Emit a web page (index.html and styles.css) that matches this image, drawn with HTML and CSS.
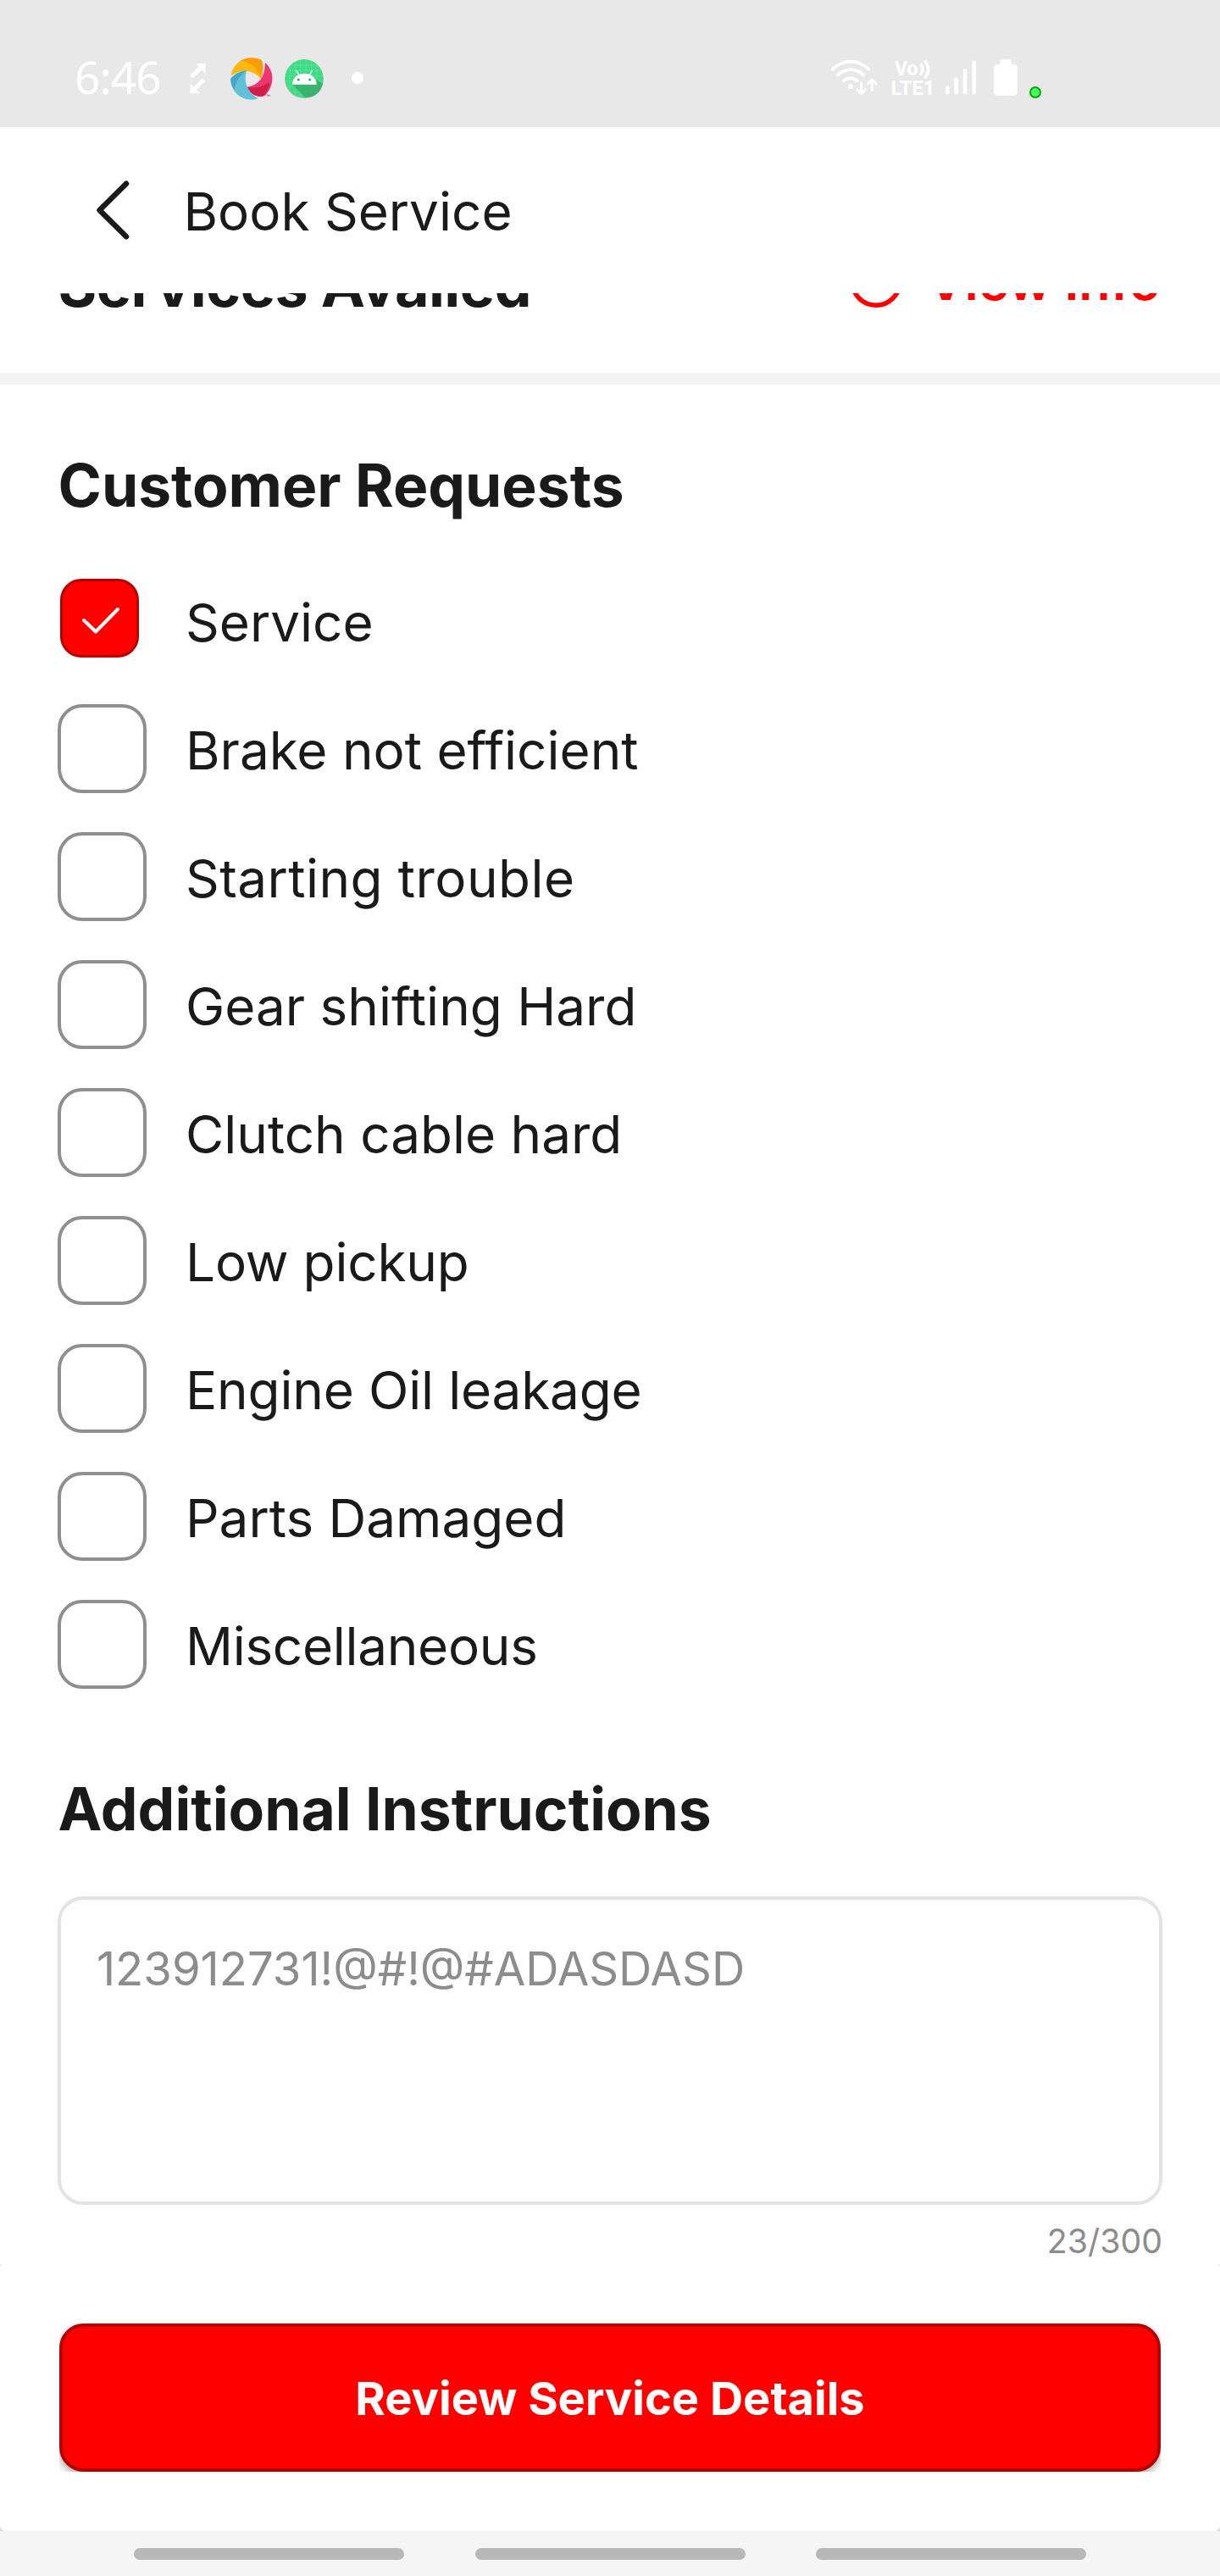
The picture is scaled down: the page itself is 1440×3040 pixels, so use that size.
FILE: index.html
```html
<!DOCTYPE html>
<html lang="en">
<head>
<meta charset="utf-8">
<title>Book Service</title>
<link rel="stylesheet" href="styles.css">
</head>
<body>
<div class="screen">
  <div class="status-bar">
    <span class="clock">6:46</span>
    <svg class="status-icon sync" width="24" height="40" viewBox="222 72 24 40" fill="#fff">
      <path d="M231.500 75H242.500V86.500L238.500 82.500L227.500 92L224.500 89L234.500 78.500Z"/>
      <path d="M239 92.500L242 95.500L232 106L236.500 110H224.500V98.500L228.500 102.500Z"/>
    </svg>
    <svg class="status-icon swirl" width="50" height="50" viewBox="636 83 148 148">
      <path d="M638 146C646 92 700 70 745 92C752 112 750 135 742 156C716 126 676 122 638 146Z" fill="#fdb913"/>
      <path d="M672 95C705 96 732 120 742 156C750 135 752 112 745 92C722 81 694 80 672 95Z" fill="#fc9c06"/>
      <path d="M757 101C790 128 792 180 755 217C725 222 705 210 695 186C735 180 758 150 757 101Z" fill="#ee356f"/>
      <path d="M695 186C705 210 725 222 750 218C762 206 770 192 774 168C748 186 722 191 695 186Z" fill="#cf1f49"/>
      <path d="M692 129C680 165 695 207 734 226C690 240 640 216 636 158C650 140 670 130 692 129Z" fill="#62c1da"/>
      <path d="M692 129C670 130 650 140 636 158C638 175 643 186 650 196C655 166 668 145 692 129Z" fill="#43a9c6"/>
      <path d="M762 213h4v5M769 218v-5l2 3l2-3v5" fill="none" stroke="#ee356f" stroke-width="2"/>
    </svg>
    <svg class="status-icon android" width="48" height="50" viewBox="827 83 144 150">
      <circle cx="899" cy="160" r="68" fill="#b5c2ba"/>
      <circle cx="899" cy="157" r="68" fill="#3ddb85"/>
      <path d="M848 112V203M867 98V217M886 90V224M905 90V224M924 94V220M943 106V208M850 110H947M838 128H960M833 147H965M832 166H966M838 185H960M850 204H947" stroke="#75e6a8" stroke-width="1.500"/>
      <path d="M858 178L942 178L942 160L965 175C960 205 936 225 902 224Z" fill="#35a667" opacity=".75"/>
      <path d="M857 178C859 126 940 126 943 178Z" fill="#fff"/>
      <path d="M872 130L880 143M927 130L919 143" stroke="#fff" stroke-width="4" stroke-linecap="round"/>
      <circle cx="879" cy="161" r="4.500" fill="#3ba868"/><circle cx="919" cy="161" r="4.500" fill="#3ba868"/>
    </svg>
    <span class="more-dot"></span>
    <svg class="status-icon wifi" width="57" height="46" viewBox="60 58 171 138" fill="none" stroke="#fff" stroke-linecap="round" stroke-linejoin="round">
      <path d="M68 96C106 60 159 60 196 96M86 117C115 91 149 91 178 117M108 136C124 124 139 124 155 136" stroke-width="11"/>
      <circle cx="132" cy="158" r="9" fill="#fff" stroke="none"/>
      <path d="M170 145V182M155 168L170 182L185 168M208 170V134M194 148L208 134L223 148" stroke-width="9"/>
    </svg>
    <svg class="status-icon volte" width="54" height="48" viewBox="1050 68 54 48">
      <g fill="#fff" font-family="Roboto, sans-serif" font-weight="700">
        <text x="1056" y="88.500" font-size="23.500" textLength="27.500" lengthAdjust="spacingAndGlyphs">Vo</text>
        <text x="1051.500" y="112" font-size="24" textLength="52" lengthAdjust="spacingAndGlyphs">LTE1</text>
      </g>
      <path d="M1086.500 75Q1091.500 82 1086.500 88.500M1091.500 71.500Q1100 82 1091.500 92" fill="none" stroke="#fff" stroke-width="3.500"/>
    </svg>
    <svg class="status-icon signal" width="38" height="44" viewBox="1115 70 38 44" fill="#fff">
      <rect x="1116" y="101.500" width="4.700" height="10" rx="2.300"/>
      <rect x="1126.300" y="91.500" width="4.700" height="20" rx="2.300"/>
      <rect x="1136.700" y="81" width="4.700" height="30.500" rx="2.300"/>
      <rect x="1147.300" y="71.500" width="4.700" height="40" rx="2.300"/>
    </svg>
    <svg class="status-icon battery" width="28" height="43" viewBox="1173 70 28 43" fill="#fff">
      <rect x="1180.500" y="70" width="13" height="12" rx="2"/>
      <rect x="1173" y="76" width="28" height="37" rx="4.500"/>
    </svg>
    <span class="privacy-dot"></span>
  </div>

  <header class="app-bar">
    <svg class="back" width="43" height="72" viewBox="0 0 43 72" fill="none" stroke="#1a1a1a" stroke-width="6.500" stroke-linecap="round" stroke-linejoin="round"><path d="M37 4.800L5.500 36L37 67.200"/></svg>
    <h1 class="title">Book Service</h1>
  </header>

  <main class="content">
    <section class="availed">
      <div class="availed-row">
        <h2 class="availed-title">Services Availed</h2>
        <a class="view-info">
          <svg width="62" height="62" viewBox="0 0 62 62" fill="none" stroke="#f00" stroke-width="5.500"><circle cx="31" cy="31" r="28.200"/><path d="M31 28V44M31 17V22"/></svg>
          <span>View Info</span>
        </a>
      </div>
    </section>

    <section class="requests">
      <h2 class="heading">Customer Requests</h2>
      <ul class="options">
        <li class="option"><span class="box checked"><svg width="46" height="34" viewBox="0 0 46 34" fill="none" stroke="#fff" stroke-width="4" stroke-linecap="round" stroke-linejoin="round"><path d="M3 17L17 30.500L43 4"/></svg></span><span class="label">Service</span></li>
        <li class="option"><span class="box"></span><span class="label">Brake not efficient</span></li>
        <li class="option"><span class="box"></span><span class="label loose">Starting trouble</span></li>
        <li class="option"><span class="box"></span><span class="label">Gear shifting Hard</span></li>
        <li class="option"><span class="box"></span><span class="label">Clutch cable hard</span></li>
        <li class="option"><span class="box"></span><span class="label snug">Low pickup</span></li>
        <li class="option"><span class="box"></span><span class="label snug">Engine Oil leakage</span></li>
        <li class="option"><span class="box"></span><span class="label">Parts Damaged</span></li>
        <li class="option"><span class="box"></span><span class="label tight">Miscellaneous</span></li>
      </ul>
      <h2 class="heading instructions-title">Additional Instructions</h2>
      <div class="field">123912731!@#!@#ADASDASD</div>
      <div class="counter">23/300</div>
    </section>
  </main>

  <footer class="action-panel">
    <div class="panel-body">
      <div class="button-clip"><button class="submit">Review Service Details</button></div>
    </div>
  </footer>
  <nav class="nav-bar"><span class="handle"></span><span class="handle"></span><span class="handle"></span></nav>
</div>
</body>
</html>
```

FILE: styles.css
```css
* { box-sizing: border-box; }

body {
  margin: 0;
  background: #fff;
  color: #1a1a1a;
  font-family: Inter, sans-serif;
}

h1, h2, ul { margin: 0; padding: 0; }
svg { display: block; flex: none; }

.screen {
  display: flex;
  flex-direction: column;
  width: 1440px;
  height: 3040px;
  overflow: hidden;
  background: #fefefe;
}

/* Status bar */
.status-bar {
  display: flex;
  align-items: flex-start;
  flex: none;
  height: 150px;
  padding: 67px 0 0 88px;
  background: #e8e8e8;
}
.clock {
  width: 134px;
  margin-top: -13px;
  color: #fff;
  font: 400 53px/73px "Noto Sans", sans-serif;
  letter-spacing: -0.9px;
}
.sync { margin-top: 5px; }
.swirl { margin: 0.5px 0 0 26px; }
.android { margin: 0.5px 0 0 13px; }
.more-dot {
  width: 14px;
  height: 14px;
  margin: 18px 0 0 32px;
  border-radius: 50%;
  background: #fff;
}
.wifi { margin: 2px 0 0 551px; }
.volte { margin: 1px 0 0 13px; }
.signal { margin: 3px 0 0 11px; }
.battery { margin: 3px 0 0 20px; }
.privacy-dot {
  width: 14px;
  height: 14px;
  margin: 35px 0 0 14px;
  border: 2px solid #00a60e;
  border-radius: 50%;
  background: #45ff5e;
}

/* App bar */
.app-bar {
  display: flex;
  align-items: center;
  flex: none;
  height: 196px;
  padding-left: 112px;
}
.title {
  margin-left: 61.5px;
  padding-top: 3px;
  font-size: 62px;
  font-weight: 400;
  line-height: 76px;
}

/* Scrolled content */
.content {
  flex: none;
  height: 2326px;
  overflow: hidden;
}
.availed {
  height: 108px;
  overflow: hidden;
  border-bottom: 14px solid #f3f3f3;
}
.availed-row {
  display: flex;
  align-items: center;
  justify-content: space-between;
  height: 100px;
  margin-top: -59.5px;
  padding: 0 70px 0 68.5px;
}
.availed-title {
  font-size: 70px;
  font-weight: 700;
  line-height: 84px;
  letter-spacing: -0.72px;
}
.view-info {
  display: flex;
  align-items: center;
  gap: 29px;
  padding-bottom: 10px;
  color: #f00;
  font-size: 61px;
  font-weight: 600;
  line-height: 74px;
}

.requests { padding: 77px 68px 0; }
.heading {
  padding-left: 0.5px;
  font-size: 69.5px;
  font-weight: 700;
  line-height: 84px;
}
.options { margin-top: 44px; list-style: none; }
.option {
  display: grid;
  grid-template-columns: 151px 1fr;
  height: 151px;
}
.box {
  width: 105px;
  height: 105px;
  margin-top: 21px;
  border: 4px solid #8f8f8f;
  border-radius: 29px;
}
.box.checked {
  display: flex;
  align-items: center;
  justify-content: center;
  width: 93px;
  height: 93px;
  margin: 24px 0 0 3px;
  padding: 5px 0 0 2px;
  border: 3px solid #b50000;
  border-radius: 25px;
  background: #f00;
}
.label {
  font-size: 62px;
  line-height: 151px;
}
.label.loose { letter-spacing: 0.44px; }
.label.snug { letter-spacing: -0.17px; }
.label.tight { letter-spacing: -0.3px; }
.instructions-title { margin-top: 75px; }
.field {
  height: 364px;
  margin-top: 61px;
  padding: 48px 42px;
  border: 4px solid #e3e3e3;
  border-radius: 30px;
  color: #8c8c8c;
  font-size: 54.4px;
  line-height: 66px;
}
.counter {
  margin-top: 19px;
  color: #8c8c8c;
  font-size: 39.3px;
  line-height: 48px;
  text-align: right;
}

/* Bottom action */
.action-panel {
  flex: none;
  height: 315px;
  background: linear-gradient(#f7f7f7, #d8d8d8);
}
.panel-body {
  height: 315px;
  padding: 70px 70px 0;
  border-radius: 6px;
  background: #fefefe;
}
.button-clip { height: 175px; overflow: hidden; }
.submit {
  display: block;
  width: 100%;
  height: 175px;
  padding: 0;
  border: 4px solid #b50000;
  border-radius: 29px;
  background: #f00;
  box-shadow: 0 4px 10px rgba(0, 0, 0, 0.35);
  color: #fff;
  font: 700 54.2px/66px Inter, sans-serif;
}

/* System navigation */
.nav-bar {
  display: flex;
  flex: none;
  gap: 83.5px;
  height: 53px;
  padding: 20px 0 0 158px;
  background: #f5f5f5;
}
.handle {
  width: 319px;
  height: 14px;
  border-radius: 7px;
  background: #b8b8b8;
}
```
